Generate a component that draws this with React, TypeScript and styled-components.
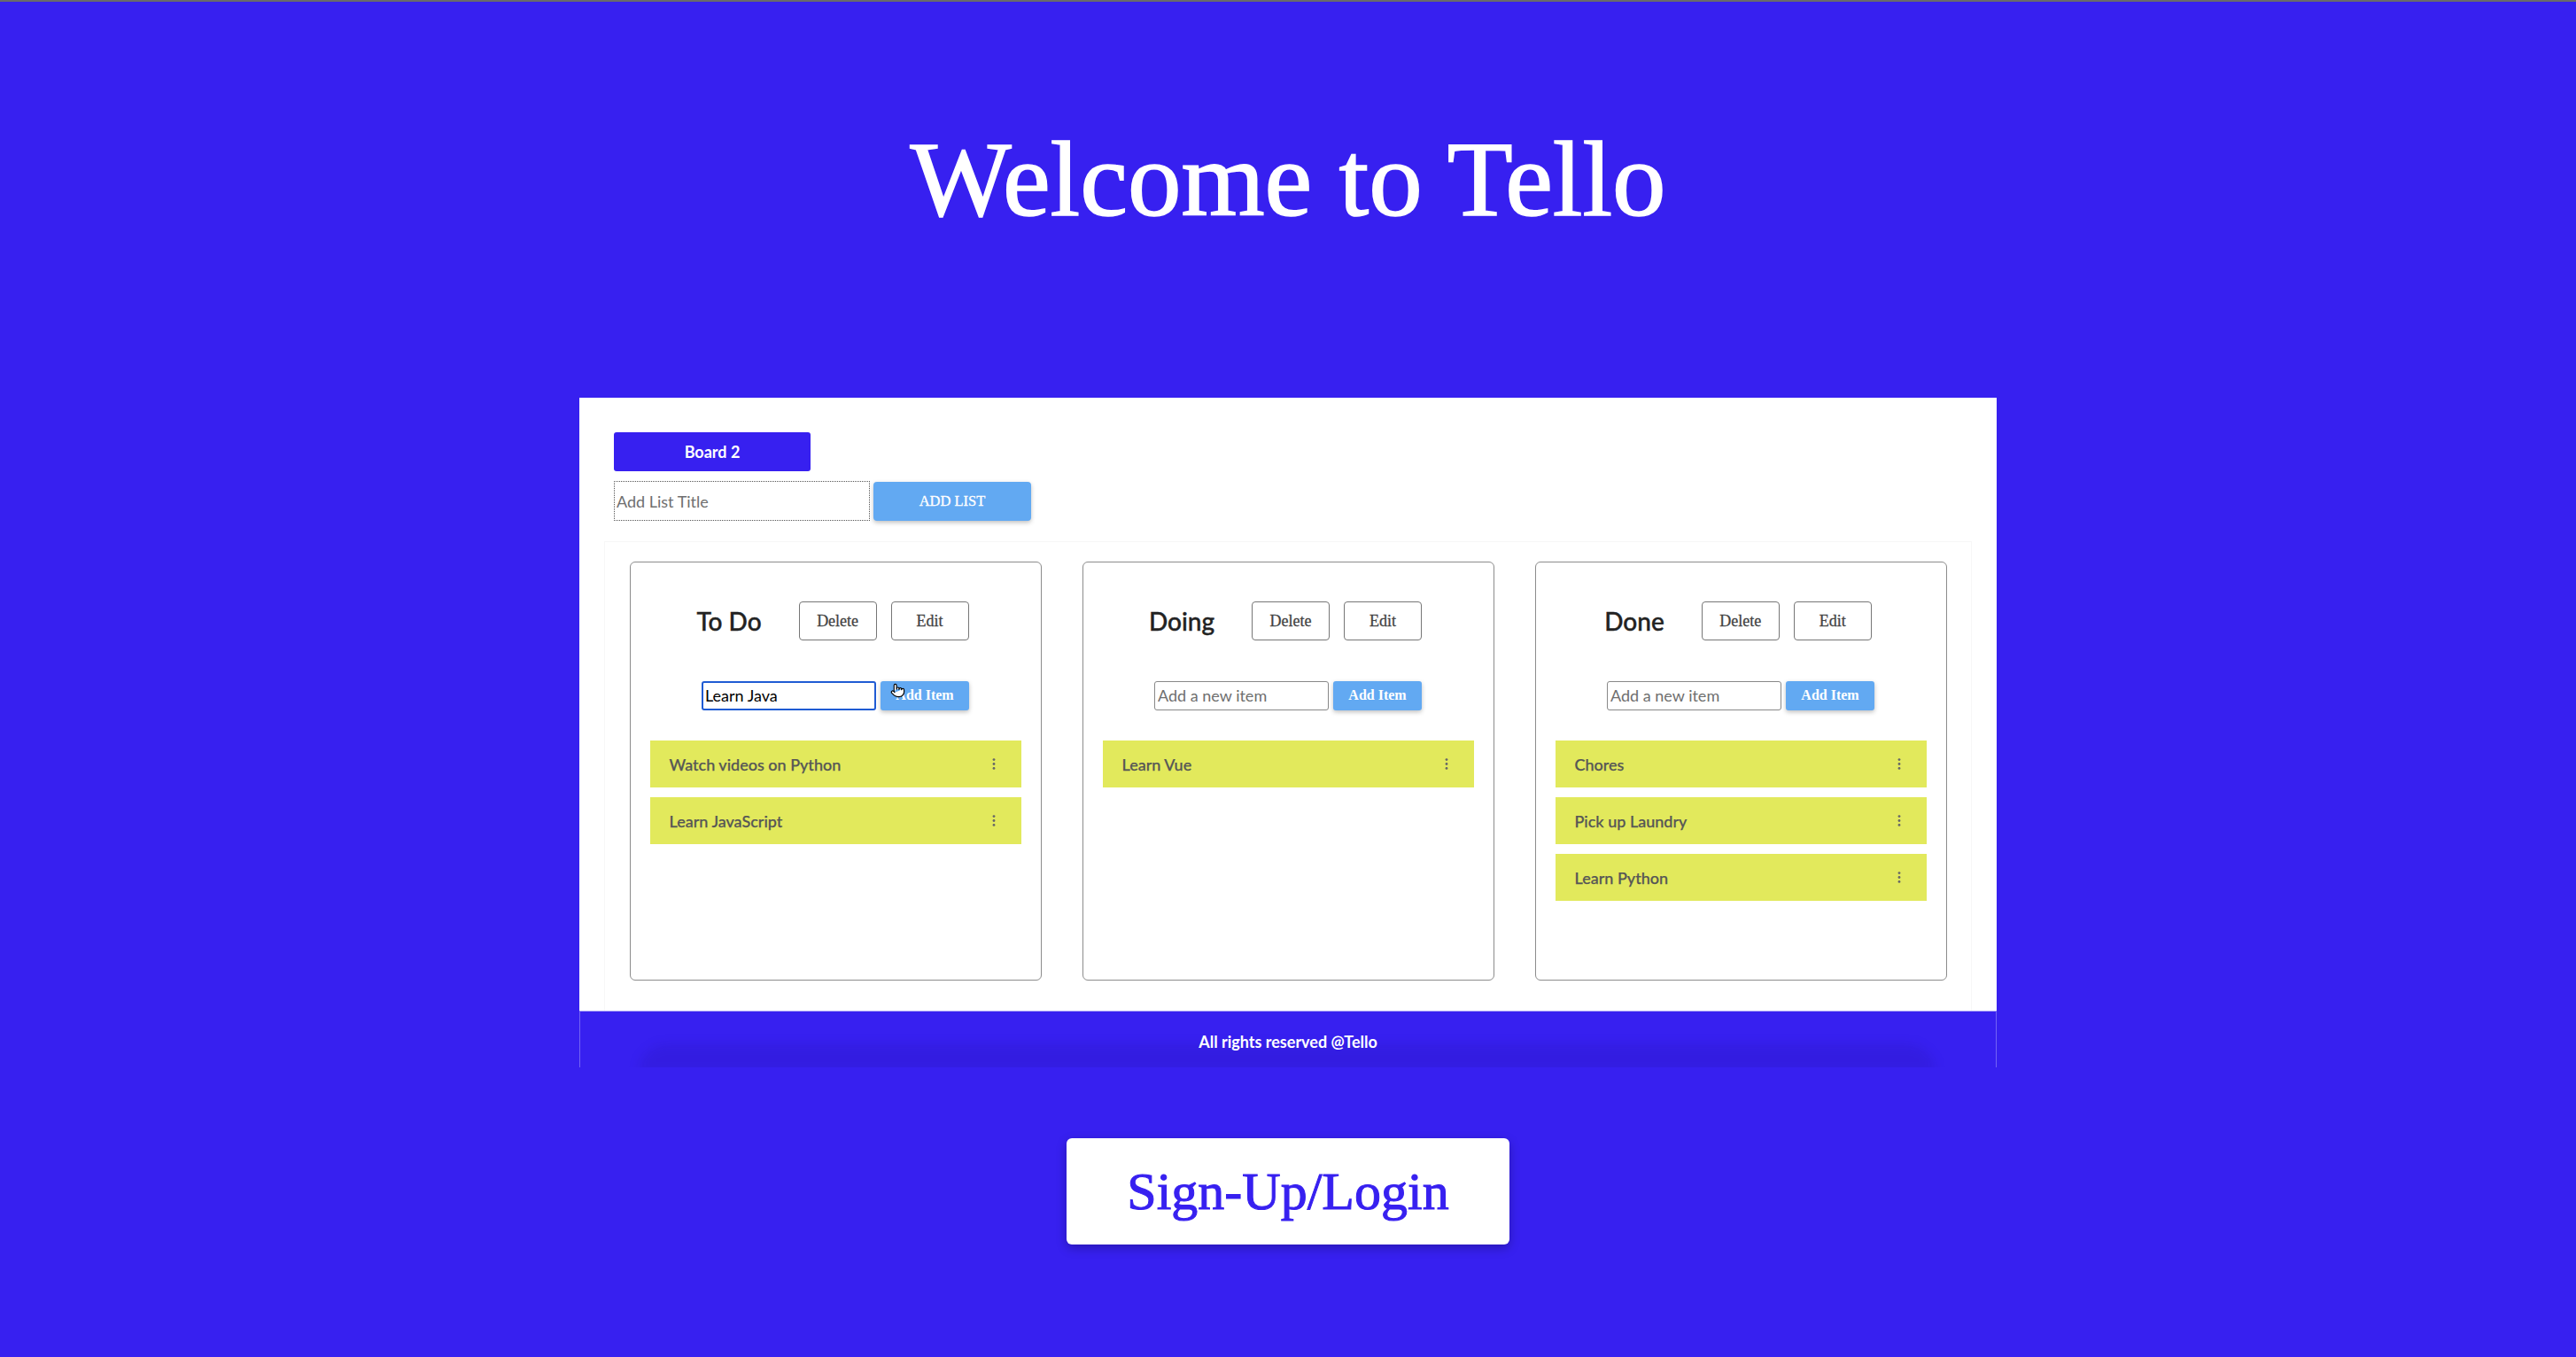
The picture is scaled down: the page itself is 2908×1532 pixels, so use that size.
import React from "react";
import styled, { createGlobalStyle } from "styled-components";
import { Pointer } from "lucide-react";

const BLUE = "#3720f0";
const LIGHT_BLUE = "#62a9f2";
const YELLOW = "#e2e95c";
const SANS = `Lato, "Open Sans", "Noto Sans", sans-serif`;
const SERIF = `"Liberation Serif", "DejaVu Serif", serif`;

const GlobalStyle = createGlobalStyle`
  html, body {
    margin: 0;
    padding: 0;
    background: ${BLUE};
  }
  * { box-sizing: border-box; }
`;

const Page = styled.div`
  min-height: 100vh;
  background: ${BLUE};
  border-top: 2px solid #6a6a6a;
  display: flex;
  flex-direction: column;
  align-items: center;
  padding-bottom: 60px;
`;

const Title = styled.h1`
  margin: 0;
  padding-top: 141px;
  font-family: ${SERIF};
  font-weight: 400;
  font-size: 121px;
  line-height: 118px;
  color: #ffffff;
  text-align: center;
  -webkit-text-stroke: 1.6px #ffffff;
`;

const BoardShell = styled.section`
  width: 1600px;
  margin-top: 188px;
  display: flex;
  flex-direction: column;
`;

const Board = styled.div`
  background: #ffffff;
  display: flex;
  flex-direction: column;
`;

const BoardTop = styled.div`
  padding: 39px 39px 0;
  display: flex;
  flex-direction: column;
  gap: 11px;
`;

const BoardTab = styled.button`
  width: 222px;
  height: 44px;
  border: none;
  border-radius: 3px;
  background: ${BLUE};
  color: #ffffff;
  font-family: ${SANS};
  font-weight: 700;
  font-size: 18px;
  cursor: pointer;
`;

const AddListRow = styled.div`
  display: flex;
  align-items: center;
  gap: 4px;
`;

const ListTitleInput = styled.input`
  width: 289px;
  height: 45px;
  border: 1.5px dotted #555;
  border-radius: 0;
  padding: 0 2px;
  font-family: ${SANS};
  font-size: 18px;
  color: #333;
  outline: none;
  &::placeholder { color: #6f6f6f; }
`;

const AddListButton = styled.button`
  width: 178px;
  height: 44px;
  border: none;
  border-radius: 4px;
  background: ${LIGHT_BLUE};
  color: #ffffff;
  font-family: ${SERIF};
  font-size: 16.5px;
  -webkit-text-stroke: 0.3px #ffffff;
  box-shadow: 0 2px 5px rgba(0, 0, 0, 0.25);
  cursor: pointer;
`;

const ListsPanel = styled.div`
  margin: 23px 28px 0;
  padding: 22px 0 34px;
  border: 1px solid #f7f7f7;
  border-bottom: none;
  display: flex;
  justify-content: center;
  gap: 46px;
`;

const Card = styled.div`
  width: 465px;
  height: 473px;
  border: 1px solid #8c8c8c;
  border-radius: 6px;
  padding: 0 22px;
  display: flex;
  flex-direction: column;
`;

const CardHeader = styled.div`
  margin-top: 44px;
  height: 44px;
  display: flex;
  align-items: center;
  justify-content: center;
  gap: 16px;
  padding-right: 6px;
`;

const CardTitle = styled.h2`
  margin: 0 26px 0 0;
  font-family: ${SANS};
  font-weight: 500;
  font-size: 28px;
  color: #222;
  -webkit-text-stroke: 0.4px #222;
`;

const HeaderButton = styled.button`
  width: 88px;
  height: 44px;
  border: 1px solid #767676;
  border-radius: 4px;
  background: #ffffff;
  color: #444;
  font-family: ${SERIF};
  font-size: 18px;
  -webkit-text-stroke: 0.3px #444;
  cursor: pointer;
`;

const ItemForm = styled.div`
  margin-top: 45px;
  height: 34px;
  display: flex;
  align-items: center;
  justify-content: center;
  gap: 5px;
`;

const ItemInput = styled.input<{ $focused?: boolean }>`
  width: 197px;
  height: 33px;
  border: ${(p) => (p.$focused ? "2px solid #1f5bd3" : "1px solid #888")};
  border-radius: 3px;
  padding: ${(p) => (p.$focused ? "0 2px" : "0 3px")};
  font-family: ${SANS};
  font-size: 18px;
  color: #000;
  outline: none;
  &::placeholder { color: #6f6f6f; }
`;

const AddItemButton = styled.button`
  position: relative;
  width: 100px;
  height: 33px;
  border: none;
  border-radius: 3px;
  background: ${LIGHT_BLUE};
  color: #ffffff;
  font-family: ${SERIF};
  font-weight: 700;
  font-size: 16px;
  box-shadow: 0 2px 5px rgba(0, 0, 0, 0.25);
  cursor: pointer;
`;

const CursorMark = styled.span`
  position: absolute;
  left: 11px;
  top: 2px;
  display: flex;
  pointer-events: none;
`;

const Items = styled.div`
  margin-top: 34px;
  display: flex;
  flex-direction: column;
  gap: 11px;
`;

const Item = styled.div`
  height: 53px;
  background: ${YELLOW};
  padding: 0 29px 0 22px;
  display: flex;
  align-items: center;
  justify-content: space-between;
`;

const ItemText = styled.span`
  font-family: ${SANS};
  font-weight: 500;
  font-size: 18px;
  color: #565656;
  -webkit-text-stroke: 0.25px #565656;
`;

const Footer = styled.footer`
  position: relative;
  height: 64px;
  background: ${BLUE};
  border-top: 1px solid #a9a1f7;
  border-left: 1px solid rgba(255, 255, 255, 0.3);
  border-right: 1px solid rgba(255, 255, 255, 0.3);
  display: flex;
  align-items: center;
  justify-content: center;
  padding-top: 4px;
  overflow: hidden;
  &::after {
    content: "";
    position: absolute;
    left: 66px;
    right: 68px;
    bottom: -6px;
    height: 32px;
    border-radius: 40px 40px 0 0;
    background: rgba(30, 10, 150, 0.16);
    filter: blur(6px);
  }
`;

const FooterText = styled.p`
  position: relative;
  z-index: 1;
  margin: 0;
  font-family: ${SANS};
  font-weight: 700;
  font-size: 18px;
  color: #ffffff;
`;

const SignUpButton = styled.button`
  margin-top: 80px;
  width: 500px;
  height: 120px;
  border: none;
  border-radius: 6px;
  background: #ffffff;
  color: ${BLUE};
  font-family: ${SERIF};
  font-size: 60px;
  -webkit-text-stroke: 1px ${BLUE};
  box-shadow: 0 4px 12px rgba(0, 0, 0, 0.25);
  cursor: pointer;
`;

const Kebab = () => (
  <svg width="4" height="13" viewBox="0 0 4 13" aria-hidden="true">
    <circle cx="2" cy="1.6" r="1.4" fill="#666" />
    <circle cx="2" cy="6.5" r="1.4" fill="#666" />
    <circle cx="2" cy="11.4" r="1.4" fill="#666" />
  </svg>
);

type ListData = {
  title: string;
  items: string[];
  draft?: string;
  hovered?: boolean;
};

const lists: ListData[] = [
  { title: "To Do", items: ["Watch videos on Python", "Learn JavaScript"], draft: "Learn Java", hovered: true },
  { title: "Doing", items: ["Learn Vue"] },
  { title: "Done", items: ["Chores", "Pick up Laundry", "Learn Python"] },
];

const ListColumn = ({ list }: { list: ListData }) => (
  <Card>
    <CardHeader>
      <CardTitle>{list.title}</CardTitle>
      <HeaderButton>Delete</HeaderButton>
      <HeaderButton>Edit</HeaderButton>
    </CardHeader>
    <ItemForm>
      <ItemInput
        placeholder="Add a new item"
        defaultValue={list.draft}
        $focused={!!list.draft}
      />
      <AddItemButton>
        Add Item
        {list.hovered && (
          <CursorMark>
            <Pointer size={17} fill="#ffffff" color="#000000" strokeWidth={1.6} />
          </CursorMark>
        )}
      </AddItemButton>
    </ItemForm>
    <Items>
      {list.items.map((it) => (
        <Item key={it}>
          <ItemText>{it}</ItemText>
          <Kebab />
        </Item>
      ))}
    </Items>
  </Card>
);

export default function App() {
  return (
    <>
      <GlobalStyle />
      <Page>
        <Title>Welcome to Tello</Title>
        <BoardShell>
          <Board>
            <BoardTop>
              <BoardTab>Board 2</BoardTab>
              <AddListRow>
                <ListTitleInput placeholder="Add List Title" />
                <AddListButton>ADD LIST</AddListButton>
              </AddListRow>
            </BoardTop>
            <ListsPanel>
              {lists.map((l) => (
                <ListColumn key={l.title} list={l} />
              ))}
            </ListsPanel>
          </Board>
          <Footer>
            <FooterText>All rights reserved @Tello</FooterText>
          </Footer>
        </BoardShell>
        <SignUpButton>Sign-Up/Login</SignUpButton>
      </Page>
    </>
  );
}
